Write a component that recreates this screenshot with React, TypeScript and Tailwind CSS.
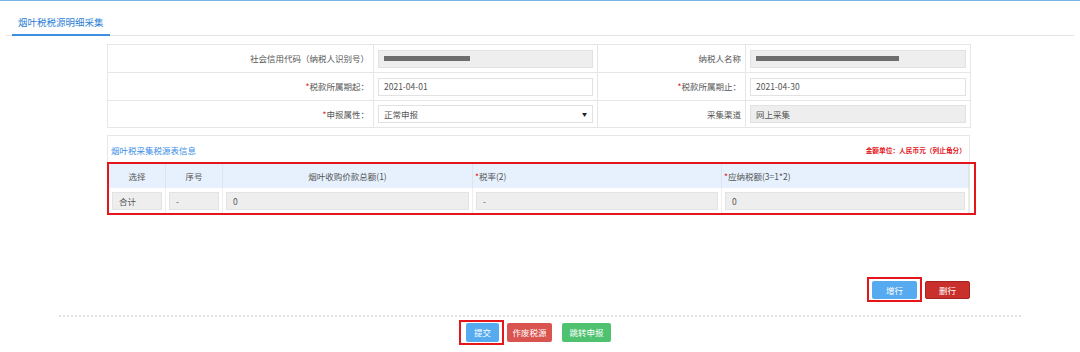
const redact = (w: number) => (
  <span className="inline-block h-[5px] bg-[#6e6e6e]" style={{ width: w }} />
);

const Req = () => <span className="text-[#e4161c]">*</span>;

const FormInput = ({
  children,
  disabled,
  select,
}: {
  children?: React.ReactNode;
  disabled?: boolean;
  select?: boolean;
}) => (
  <div
    className={`mx-[4px] flex h-[18px] items-center justify-between border border-[#e2e2e2] px-[5px] text-[8.5px] text-[#555] ${
      disabled ? "bg-[#eeeeee]" : "bg-white"
    }`}
  >
    <span className="flex items-center">{children}</span>
    {select && <span className="text-[5px] text-[#222]">▼</span>}
  </div>
);

const Label = ({ children }: { children: React.ReactNode }) => (
  <td className="border border-[#e6e6e6] pr-[4px] text-right text-[8.5px] text-[#555]">
    {children}
  </td>
);

const Cell = ({ children }: { children: React.ReactNode }) => (
  <td className="border border-[#e6e6e6]">{children}</td>
);

const GrayBox = ({ children }: { children: React.ReactNode }) => (
  <div className="mx-[3px] flex h-[18px] items-center border border-[#e3e3e3] bg-[#eeeeee] px-[6px] text-[8.5px] text-[#555]">
    {children}
  </div>
);

export default function App() {
  return (
    <div className="h-[352px] w-[1080px] overflow-hidden bg-white font-['Noto_Sans_CJK_SC',sans-serif] text-[#555]">
      <div className="h-px bg-[#79b6ea]" />

      {/* Tab */}
      <div className="mx-[6px] flex h-[35px] items-end border-b border-[#e4e4e4]">
        <div className="-mb-px ml-[6px] border-b-2 border-[#3f8fe0] px-[6px] pb-[6px] text-[9.5px] leading-[12px] text-[#2f7fd6]">
          烟叶税税源明细采集
        </div>
      </div>

      {/* Basic info */}
      <table className="ml-[107px] mt-[8px] w-[863px] table-fixed border-collapse">
        <colgroup>
          <col className="w-[266px]" />
          <col className="w-[224px]" />
          <col className="w-[148px]" />
          <col className="w-[225px]" />
        </colgroup>
        <tbody>
          <tr className="h-[28px]">
            <Label>社会信用代码（纳税人识别号）</Label>
            <Cell>
              <FormInput disabled>{redact(86)}</FormInput>
            </Cell>
            <Label>纳税人名称</Label>
            <Cell>
              <FormInput disabled>{redact(143)}</FormInput>
            </Cell>
          </tr>
          <tr className="h-[28px]">
            <Label>
              <Req />
              税款所属期起：
            </Label>
            <Cell>
              <FormInput>2021-04-01</FormInput>
            </Cell>
            <Label>
              <Req />
              税款所属期止：
            </Label>
            <Cell>
              <FormInput>2021-04-30</FormInput>
            </Cell>
          </tr>
          <tr className="h-[27px]">
            <Label>
              <Req />
              申报属性：
            </Label>
            <Cell>
              <FormInput select>正常申报</FormInput>
            </Cell>
            <Label>采集渠道</Label>
            <Cell>
              <FormInput disabled>网上采集</FormInput>
            </Cell>
          </tr>
        </tbody>
      </table>

      {/* Tax source info */}
      <div className="ml-[107px] mt-[7px] w-[863px] border border-[#e6e6e6]">
        <div className="flex h-[28px] items-center justify-between px-[3px]">
          <span className="text-[8.5px] text-[#3a8ee6]">烟叶税采集税源表信息</span>
          <span className="text-[6.7px] font-bold text-[#e4161c]">
            金额单位：人民币元（列止角分）
          </span>
        </div>
        <div className="relative">
          <table className="w-full table-fixed border-collapse">
            <colgroup>
              <col className="w-[57px]" />
              <col className="w-[57px]" />
              <col className="w-[250px]" />
              <col className="w-[249px]" />
              <col />
            </colgroup>
            <thead>
              <tr className="h-[24px] bg-[#e6f1fd] text-[8.5px] text-[#555]">
                <th className="border-x border-[#dbe5ef] font-normal">选择</th>
                <th className="border-x border-[#dbe5ef] font-normal">序号</th>
                <th className="border-x border-[#dbe5ef] font-normal">
                  烟叶收购价款总额(1)
                </th>
                <th className="border-x border-[#dbe5ef] pl-[2px] text-left font-normal">
                  <Req />
                  税率(2)
                </th>
                <th className="border-x border-[#dbe5ef] pl-[2px] text-left font-normal">
                  <Req />
                  应纳税额(3=1*2)
                </th>
              </tr>
            </thead>
            <tbody>
              <tr className="h-[26px]">
                <td className="border-x border-[#eeeeee]">
                  <GrayBox>合计</GrayBox>
                </td>
                <td className="border-x border-[#eeeeee]">
                  <GrayBox>-</GrayBox>
                </td>
                <td className="border-x border-[#eeeeee]">
                  <GrayBox>0</GrayBox>
                </td>
                <td className="border-x border-[#eeeeee]">
                  <GrayBox>-</GrayBox>
                </td>
                <td className="border-x border-[#eeeeee]">
                  <GrayBox>0</GrayBox>
                </td>
              </tr>
            </tbody>
          </table>
          <span className="pointer-events-none absolute -left-px -right-[7px] -top-[2px] -bottom-px border-2 border-[#e4161c]" />
        </div>
      </div>

      {/* Row actions */}
      <div className="ml-[107px] mt-[66px] flex w-[863px] items-start justify-end gap-[8px]">
        <div className="relative flex">
          <button className="flex h-[18px] w-[45px] items-center justify-center rounded-[2px] bg-[#55aaf0] text-[8.5px] leading-none text-white">
            增行
          </button>
          <span className="pointer-events-none absolute -inset-x-[5px] -bottom-[3px] -top-[4px] border-2 border-[#e4161c]" />
        </div>
        <button className="flex h-[18px] w-[45px] items-center justify-center rounded-[2px] border border-[#a52420] bg-[#c9302c] text-[8.5px] leading-none text-white">
          删行
        </button>
      </div>

      <div className="mx-[59px] mt-[16px] border-t-2 border-dotted border-[#e2e2e2]" />

      {/* Submit actions */}
      <div className="mt-[6px] flex items-start justify-center gap-[8px] pr-[3px]">
        <div className="relative flex">
          <button className="flex h-[19px] w-[33px] items-center justify-center rounded-[2px] bg-[#55aaf0] text-[8.5px] leading-none text-white">
            提交
          </button>
          <span className="pointer-events-none absolute -left-[7px] -right-[5px] -bottom-[3px] -top-[3px] border-2 border-[#e4161c]" />
        </div>
        <button className="flex h-[19px] w-[45px] items-center justify-center rounded-[2px] bg-[#d9534f] text-[8.5px] leading-none text-white">
          作废税源
        </button>
        <button className="ml-[2px] flex h-[19px] w-[49px] items-center justify-center rounded-[2px] bg-[#4fc26f] text-[8.5px] leading-none text-white">
          跳转申报
        </button>
      </div>
    </div>
  );
}
